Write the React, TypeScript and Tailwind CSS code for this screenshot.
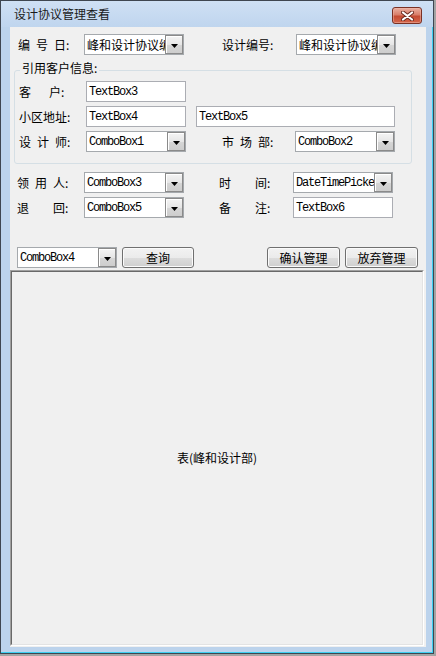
import React from "react";

const cjk = "font-['Noto_Sans_CJK_SC','Noto_Sans_CJK_JP',sans-serif]";
const mono = "font-['Liberation_Mono','Noto_Sans_CJK_SC',monospace] text-[12px] tracking-[-1.2px]";

function Lbl({ t, w, cls = "" }: { t: string; w: string; cls?: string }) {
  return (
    <div className={`flex shrink-0 h-[21px] items-center text-[12px] leading-none text-black ${w} ${cls}`}>
      {t.split("").map((c, i) =>
        c === " " ? (
          <span key={i} className="inline-block w-[6px] shrink-0" />
        ) : (
          <span key={i} className="shrink-0">
            {c}
          </span>
        )
      )}
    </div>
  );
}

function DropBtn() {
  return (
    <div className="w-[18px] h-full shrink-0 border border-[#8a8a8a] bg-[linear-gradient(to_bottom,#f4f4f4_0%,#e6e6e6_50%,#d6d6d6_51%,#cdcdcd_100%)] shadow-[inset_1px_1px_0_#ffffff] flex items-center justify-center">
      <svg width="7" height="4" viewBox="0 0 7 4" className="mt-[2px]">
        <path d="M0 0 H7 L3.5 4 Z" fill="#000" />
      </svg>
    </div>
  );
}

function Combo({ text, w = "w-[100px]", cjkText = false, cls = "" }: { text: string; w?: string; cjkText?: boolean; cls?: string }) {
  return (
    <div className={`flex h-[21px] shrink-0 border border-[#a5a9ad] bg-white ${w} ${cls}`}>
      <div
        className={`flex-1 min-w-0 overflow-hidden whitespace-nowrap pl-[2px] flex items-center text-black ${
          cjkText ? "text-[12px] leading-none" : mono
        }`}
      >
        {text}
      </div>
      <DropBtn />
    </div>
  );
}

function TBox({ text, w = "w-[100px]", cls = "" }: { text: string; w?: string; cls?: string }) {
  return (
    <div className={`flex h-[21px] shrink-0 items-center border border-[#abadb3] bg-white pl-[2px] overflow-hidden whitespace-nowrap text-black ${mono} ${w} ${cls}`}>
      {text}
    </div>
  );
}

function Btn({ text, w = "w-[73px]", cls = "" }: { text: string; w?: string; cls?: string }) {
  return (
    <div
      className={`flex h-[21px] shrink-0 items-center justify-center rounded-[3px] border border-[#707070] bg-[linear-gradient(to_bottom,#f2f2f2_0%,#ebebeb_50%,#dddddd_51%,#cfcfcf_100%)] shadow-[inset_0_0_0_1px_#fbfbfb] text-[12px] leading-none text-black ${w} ${cls}`}
    >
      {text}
    </div>
  );
}

export default function App() {
  return (
    <div className={`w-[436px] h-[656px] bg-[#a3a3a3] overflow-hidden ${cjk}`}>
      <div className="w-[434px] h-[654px] border border-[#3f4650] bg-[#bcd3ec] shadow-[inset_-1px_-1px_0_#3ccff2] flex flex-col">
        {/* Title bar */}
        <div className="h-[26px] shrink-0 flex items-center pl-[13px] bg-[linear-gradient(to_bottom,#cfe0f4,#bfd5ee)]">
          <span className="text-[12px] leading-none text-[#1a1a1a]">设计协议管理查看</span>
          <div className="ml-auto mr-[11px] self-start mt-[6px] w-[30px] h-[17px] rounded-[3px] border border-[#7a3124] bg-[linear-gradient(to_bottom,#eab0a2_0%,#d97e69_45%,#c54b33_55%,#d4664b_100%)] shadow-[inset_0_0_0_1px_#f0b8aa80] flex items-center justify-center">
            <svg width="13" height="10" viewBox="0 0 13 10">
              <path d="M2 1.5 L11 8.5 M11 1.5 L2 8.5" stroke="#6b2a20" strokeWidth="4" strokeLinecap="round" />
              <path d="M2 1.5 L11 8.5 M11 1.5 L2 8.5" stroke="#ffffff" strokeWidth="2.2" strokeLinecap="round" />
            </svg>
          </div>
        </div>

        {/* Client row */}
        <div className="flex pl-[9px]">
          <div className="w-[416px] h-[620px] bg-[#f0f0f0] flex flex-col">
            {/* Row 1 */}
            <div className="flex mt-[7px] items-center">
              <Lbl t="编 号 日:" w="w-[66px]" cls="ml-[8px]" />
              <Combo text="峰和设计协议编号" cjkText />
              <Lbl t="设计编号:" w="w-[74px]" cls="ml-[38px]" />
              <Combo text="峰和设计协议编号" cjkText />
            </div>

            {/* Group box */}
            <fieldset className="ml-[4px] mt-[7px] w-[398px] h-[102px] border border-[#d5dfe5] rounded-[3px] pl-[4px] pr-0 pb-0 pt-0 m-0 min-w-0">
              <legend className="ml-[1px] px-[2px] pb-[4px] text-[12px] leading-[12px] text-black">引用客户信息:</legend>
              <div className="flex flex-col gap-[4px] mt-[3px]">
                <div className="flex items-center">
                  <Lbl t="客   户:" w="w-[67px]" />
                  <TBox text="TextBox3" />
                </div>
                <div className="flex items-center">
                  <Lbl t="小区地址:" w="w-[67px]" />
                  <TBox text="TextBox4" />
                  <TBox text="TextBox5" w="w-[199px]" cls="ml-[10px]" />
                </div>
                <div className="flex items-center">
                  <Lbl t="设 计 师:" w="w-[67px]" />
                  <Combo text="ComboBox1" />
                  <Lbl t="市 场 部:" w="w-[73px]" cls="ml-[36px]" />
                  <Combo text="ComboBox2" />
                </div>
              </div>
            </fieldset>

            {/* Lower rows */}
            <div className="flex items-center mt-[8px]">
              <Lbl t="领 用 人:" w="w-[67px]" cls="ml-[7px]" />
              <Combo text="ComboBox3" />
              <Lbl t="时    间:" w="w-[74px]" cls="ml-[35px]" />
              <Combo text="DateTimePicker1" />
            </div>
            <div className="flex items-center mt-[4px]">
              <Lbl t="退    回:" w="w-[67px]" cls="ml-[7px]" />
              <Combo text="ComboBox5" />
              <Lbl t="备    注:" w="w-[74px]" cls="ml-[35px]" />
              <TBox text="TextBox6" />
            </div>

            {/* Bottom action row */}
            <div className="flex items-center mt-[29px]">
              <Combo text="ComboBox4" cls="ml-[7px]" />
              <Btn text="查询" w="w-[72px]" cls="ml-[5px]" />
              <Btn text="确认管理" cls="ml-[73px]" />
              <Btn text="放弃管理" cls="ml-[5px]" />
            </div>

            {/* Table panel */}
            <div className="flex-1 mt-[2px] mr-[2px] mb-[1px] flex border border-t-[#a0a0a0] border-l-[#a0a0a0] border-r-white border-b-white">
              <div className="flex-1 flex items-center justify-center border border-t-[#696969] border-l-[#696969] border-r-[#e3e3e3] border-b-[#e3e3e3] bg-[#f0f0f0]">
                <span className="text-[12px] leading-none text-black">表(峰和设计部)</span>
              </div>
            </div>
          </div>
        </div>
      </div>
    </div>
  );
}
